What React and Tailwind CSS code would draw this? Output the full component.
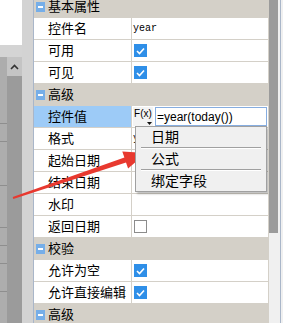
import React from "react";

const sections = [
  {
    title: "基本属性",
    first: true,
    rows: [
      { label: "控件名", kind: "text", text: "year" },
      { label: "可用", kind: "check", checked: true },
      { label: "可见", kind: "check", checked: true },
    ],
  },
  {
    title: "高级",
    rows: [
      { label: "控件值", kind: "formula", selected: true },
      { label: "格式", kind: "clip", text: "yyyy" },
      { label: "起始日期" },
      { label: "结束日期" },
      { label: "水印" },
      { label: "返回日期", kind: "check", checked: false },
    ],
  },
  {
    title: "校验",
    rows: [
      { label: "允许为空", kind: "check", checked: true },
      { label: "允许直接编辑", kind: "check", checked: true },
    ],
  },
  { title: "高级", rows: [] },
];

const menuItems = ["日期", "公式", "绑定字段"];

// left side panel (partly cut off in the screenshot)
const leftLines = [67, 18, 44, 42, 18, 18, 28];

const LeftPanel = () => (
  <div className="flex w-[33px] shrink-0">
    <div className="flex w-[22px] flex-col">
      <div className="h-[45px] bg-white" />
      <div className="h-[12px] bg-[#d4d4d4]" />
      <div className="flex flex-1">
        <div className="flex w-[7px] flex-col bg-[#adadad]">
          {leftLines.map((h, i) => (
            <div key={i} className="border-b border-[#8e8e8e]" style={{ height: h }} />
          ))}
        </div>
        <div className="flex w-[15px] flex-col bg-[#9b9b9b]">
          <div className="flex h-[19px] items-center justify-center bg-[#c4c4c4]">
            <svg width="9" height="6" viewBox="0 0 9 6">
              <path d="M1 5 L4.5 1.5 L8 5" fill="none" stroke="#333" strokeWidth="1.6" />
            </svg>
          </div>
        </div>
      </div>
    </div>
    <div className="w-[11px] bg-[#d3d3d3]" />
  </div>
);

const Check = ({ checked }) =>
  checked ? (
    <div className="ml-[1px] flex h-[13px] w-[13px] items-center justify-center bg-[#2f8fe8]">
      <svg width="9" height="8" viewBox="0 0 9 8">
        <path d="M1 4 L3.5 6.5 L8 1.5" fill="none" stroke="white" strokeWidth="1.6" />
      </svg>
    </div>
  ) : (
    <div className="ml-[1px] h-[13px] w-[13px] border border-[#8c8c8c] bg-white" />
  );

const FormulaCell = () => (
  <div className="relative flex h-full flex-1 items-center gap-[2px] pl-[1px]">
    <div className="relative flex h-[19px] w-[20px] items-start justify-center bg-[#f3f3f3] pt-[1px] text-[10px] leading-[12px] font-['Liberation_Sans',sans-serif]">
      F(x)
      <svg className="absolute bottom-[1px] right-[1px]" width="5" height="3" viewBox="0 0 5 3">
        <path d="M0 0 L5 0 L2.5 3 Z" fill="#111" />
      </svg>
    </div>
    <div className="mr-[1px] flex h-[19px] flex-1 items-center border border-[#86ade0] bg-white pl-[1px] text-[12px] font-['Liberation_Sans',sans-serif]">
      =year(today())
    </div>

    {/* dropdown menu */}
    <div className="absolute left-[3px] top-[20px] z-10 w-[132px] border border-[#a0a0a0] bg-[#f0f0f0] shadow-[2px_2px_2px_rgba(0,0,0,0.25)]">
      {menuItems.map((item, i) => (
        <div key={item}>
          {i > 0 && <div className="mx-[5px] border-t border-b border-t-[#a0a0a0] border-b-white" />}
          <div className="flex h-[20px] items-center pl-[15px] text-[14px]">{item}</div>
        </div>
      ))}
    </div>
  </div>
);

const Row = ({ row }) => (
  <div className="flex h-[22px] border-b border-[#d4d0c8] bg-white">
    <div
      className={`flex w-[98px] items-center border-r border-[#d4d0c8] pl-[14px] ${
        row.selected ? "bg-[#9dcbf7]" : "bg-white"
      }`}
    >
      {row.label}
    </div>
    {row.kind === "formula" ? (
      <FormulaCell />
    ) : (
      <div className="flex flex-1 items-center pl-[1px]">
        {row.kind === "check" && <Check checked={row.checked} />}
        {row.kind === "text" && (
          <span className="text-[10px] font-['Liberation_Mono',monospace]">{row.text}</span>
        )}
        {/* mostly hidden behind the dropdown */}
        {row.kind === "clip" && (
          <span className="w-[3px] overflow-hidden whitespace-nowrap text-[10px] font-['Liberation_Mono',monospace]">
            {row.text}
          </span>
        )}
      </div>
    )}
  </div>
);

const SectionHeader = ({ title, first }) => (
  <div className={`flex h-[22px] items-center gap-[3px] bg-[#d4d0c8] pl-[2px] ${first ? "-mt-[4px]" : ""}`}>
    <div className="flex h-[10px] w-[9px] items-center justify-center bg-[#76aee8]">
      <div className="h-[2px] w-[5px] bg-white" />
    </div>
    <span>{title}</span>
  </div>
);

const PropertyGrid = () => (
  <div className="flex w-[235px] shrink-0 flex-col overflow-hidden border-r border-[#d4d0c8] bg-[#d4d0c8]">
    {sections.map((s, i) => (
      <div key={i}>
        <SectionHeader title={s.title} first={s.first} />
        {s.rows.map((r) => (
          <Row key={r.label} row={r} />
        ))}
      </div>
    ))}
  </div>
);

const Scrollbar = () => (
  <div className="flex w-[14px] shrink-0 bg-[#f0f0f0]">
    <div className="flex w-[9px] flex-col">
      <div className="h-[233px] bg-[#9b9b9b]" />
    </div>
    <div className="ml-[2px] w-px bg-[#a9b6c9]" />
  </div>
);

const Arrow = () => (
  <svg className="pointer-events-none absolute inset-0" width="283" height="323" viewBox="0 0 283 323">
    <polygon
      points="13.3,198.9 12.7,197.1 124.4,157.6 122.3,151.5 146,153 128.1,168.5 126,162.4"
      fill="#e8392f"
    />
  </svg>
);

export default function App() {
  return (
    <div className="relative flex h-[323px] w-[283px] overflow-hidden bg-[#f0f0f0] text-[13px] text-black font-['Liberation_Sans','Noto_Sans_CJK_SC',sans-serif]">
      <LeftPanel />
      <div className="w-px shrink-0 bg-[#a9b6c9]" />
      <PropertyGrid />
      <Scrollbar />
      <Arrow />
    </div>
  );
}
